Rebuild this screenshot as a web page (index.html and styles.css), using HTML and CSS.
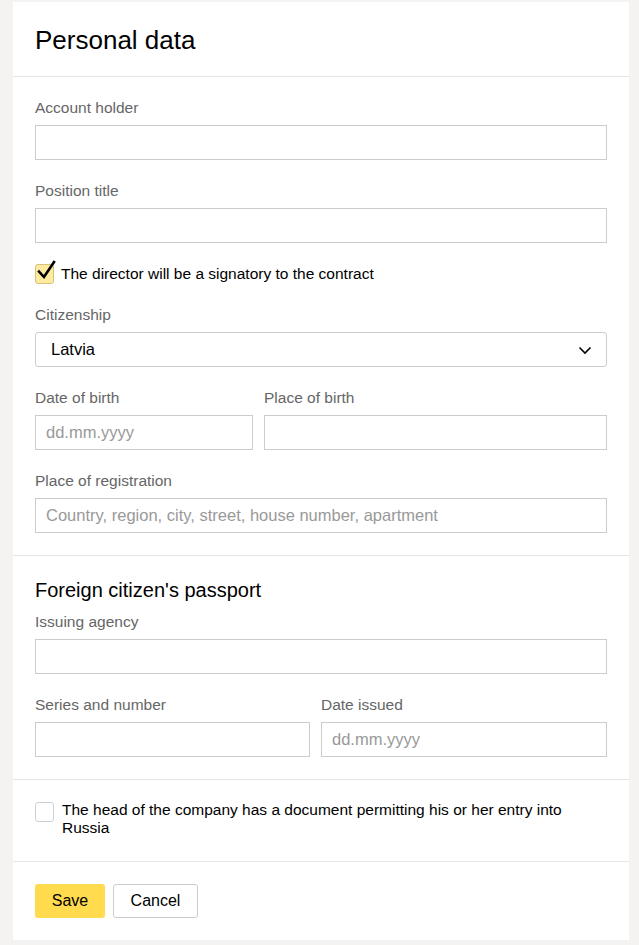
FILE: index.html
```html
<!DOCTYPE html>
<html>
<head>
<meta charset="utf-8">
<link rel="stylesheet" href="styles.css">
</head>
<body>
<div class="card">
  <div class="header"><h1 class="title">Personal data</h1></div>

  <div class="section s1">
    <div class="field">
      <div class="label">Account holder</div>
      <div class="input"></div>
    </div>
    <div class="field">
      <div class="label">Position title</div>
      <div class="input"></div>
    </div>
    <div class="field check-row">
      <span class="checkbox checked">
        <svg class="tick" width="22" height="22" viewBox="0 0 22 22"><path d="M4 11.5 L9 17 L19 2" fill="none" stroke="#000" stroke-width="2.6" stroke-linecap="square" stroke-linejoin="miter"/></svg>
      </span>
      <span class="check-text">The director will be a signatory to the contract</span>
    </div>
    <div class="field">
      <div class="label">Citizenship</div>
      <div class="input select"><span class="value">Latvia</span>
        <svg class="chev" width="14" height="9" viewBox="0 0 14 9"><path d="M1.5 1.5 L7 7 L12.5 1.5" fill="none" stroke="#000" stroke-width="1.6"/></svg>
      </div>
    </div>
    <div class="row row-a">
      <div class="field">
        <div class="label">Date of birth</div>
        <div class="input"><span class="ph">dd.mm.yyyy</span></div>
      </div>
      <div class="field">
        <div class="label">Place of birth</div>
        <div class="input"></div>
      </div>
    </div>
    <div class="field last">
      <div class="label">Place of registration</div>
      <div class="input"><span class="ph">Country, region, city, street, house number, apartment</span></div>
    </div>
  </div>

  <div class="section s2">
    <h2 class="subtitle">Foreign citizen's passport</h2>
    <div class="field">
      <div class="label">Issuing agency</div>
      <div class="input"></div>
    </div>
    <div class="row row-b">
      <div class="field last">
        <div class="label">Series and number</div>
        <div class="input"></div>
      </div>
      <div class="field last">
        <div class="label">Date issued</div>
        <div class="input"><span class="ph">dd.mm.yyyy</span></div>
      </div>
    </div>
  </div>

  <div class="section s3">
    <div class="check-row2">
      <span class="checkbox"></span>
      <span class="check-text2">The head of the company has a document permitting his or her entry into Russia</span>
    </div>
  </div>

  <div class="footer">
    <button class="btn btn-save">Save</button>
    <button class="btn btn-cancel">Cancel</button>
  </div>
</div>
</body>
</html>
```

FILE: styles.css
```css
html, body {
  margin: 0;
  padding: 0;
  background: #f4f3f1;
}
body {
  font-family: "Liberation Sans", Arial, sans-serif;
  color: #000;
  padding: 2px 10px 5px 13px;
}
.card {
  background: #fff;
  width: 616px;
  height: 938px;
  box-sizing: border-box;
}
.header {
  height: 75px;
  box-sizing: border-box;
  padding: 23px 22px 0;
  border-bottom: 1px solid #e6e6e6;
}
.title {
  margin: 0;
  font-weight: normal;
  font-size: 26px;
  line-height: 30px;
}
.section {
  padding: 21px 22px 22px 22px;
  border-bottom: 1px solid #e6e6e6;
}
.s1 { height: 479px; box-sizing: border-box; }
.s2 { padding-top: 22px; height: 224px; box-sizing: border-box; }
.s3 { padding-top: 21px; height: 82px; box-sizing: border-box; }
.field { margin-bottom: 21px; }
.field.last { margin-bottom: 0; }
.label {
  font-size: 15.5px;
  line-height: 20px;
  color: #666;
  margin-bottom: 7px;
}
.input {
  height: 35px;
  box-sizing: border-box;
  border: 1px solid #cccccc;
  display: flex;
  align-items: center;
  padding: 0 10px;
  font-size: 16.5px;
}
.ph { color: #999; }
.select {
  border-radius: 3px;
  padding: 0 14px 0 15px;
  justify-content: space-between;
}
.select .value { color: #000; }
.chev { margin-top: 1px; }
.row { display: grid; column-gap: 11px; }
.row-a { grid-template-columns: 218px 343px; }
.row-b { grid-template-columns: 275px 286px; }
.check-row {
  display: flex;
  align-items: center;
  height: 21px;
  gap: 7px;
  margin-top: -1px;
}
.checkbox {
  position: relative;
  width: 19px;
  height: 20px;
  box-sizing: border-box;
  border: 1px solid #cfcfcf;
  border-radius: 3px;
  background: #fff;
  flex: none;
}
.checkbox.checked {
  background: #ffeba0;
  border-color: #d8c27a;
}
.tick {
  position: absolute;
  left: -1px;
  top: -5px;
}
.check-text {
  font-size: 15.5px;
  line-height: 20px;
}
.check-row2 {
  display: flex;
  align-items: flex-start;
  gap: 8px;
}
.check-row2 .checkbox { margin-top: 1px; }
.check-text2 {
  font-size: 15.5px;
  line-height: 18px;
  width: 530px;
}
.subtitle {
  margin: 0 0 10px;
  font-weight: normal;
  font-size: 20px;
  line-height: 24px;
}
.footer {
  padding: 22px 22px;
  display: flex;
  gap: 8px;
}
.btn {
  font-family: "Liberation Sans", Arial, sans-serif;
  font-size: 16px;
  height: 34px;
  box-sizing: border-box;
  border-radius: 3px;
  color: #000;
  padding: 0;
  cursor: pointer;
}
.btn-save {
  width: 70px;
  background: #ffdb4d;
  border: none;
}
.btn-cancel {
  width: 85px;
  background: #fff;
  border: 1px solid #cccccc;
}
```
